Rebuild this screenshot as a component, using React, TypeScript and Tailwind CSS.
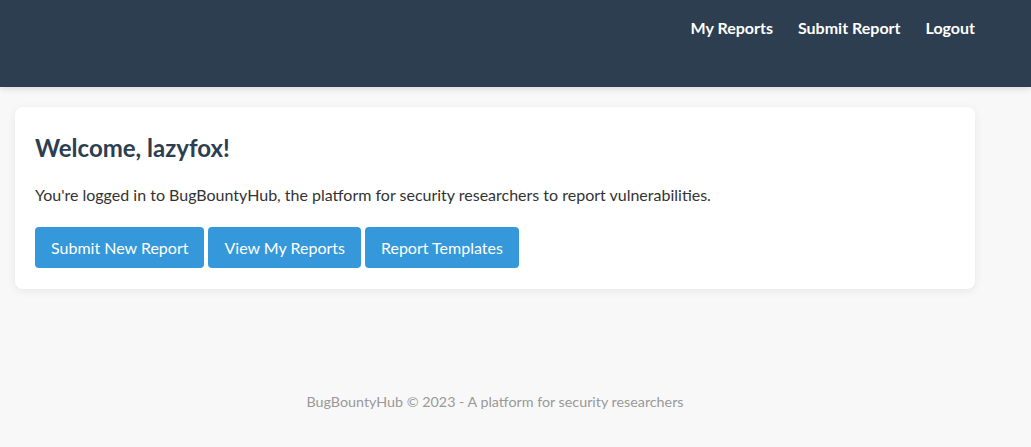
export default function App() {
  return (
    <div className="min-h-[447px] bg-[#f8f8f8] text-[#333] font-['Segoe_UI','Lato','Noto_Sans',sans-serif]">
      <header className="h-[87px] bg-[#2c3e50] text-white shadow-[0_2px_6px_rgba(0,0,0,0.12)]">
        <nav className="w-[960px] ml-[15px] flex justify-end gap-[25px] pt-4 text-base font-bold">
          <a href="#" className="hover:underline">My Reports</a>
          <a href="#" className="hover:underline">Submit Report</a>
          <a href="#" className="hover:underline">Logout</a>
        </nav>
      </header>

      <main className="w-[960px] ml-[15px] pt-5">
        <div className="bg-white rounded-lg shadow-[0_2px_10px_rgba(0,0,0,0.07)] p-5 pb-[21px]">
          <h1 className="text-2xl font-bold text-[#2c3e50] mt-[5px] mb-[19px]">Welcome, lazyfox!</h1>
          <p className="text-base mb-5">
            You're logged in to BugBountyHub, the platform for security researchers to report vulnerabilities.
          </p>
          <div className="flex gap-1">
            <button className="bg-[#3498db] text-white rounded px-4 h-[41px] text-base">Submit New Report</button>
            <button className="bg-[#3498db] text-white rounded px-4 h-[41px] text-base">View My Reports</button>
            <button className="bg-[#3498db] text-white rounded px-4 h-[41px] text-base">Report Templates</button>
          </div>
        </div>

        <footer className="mt-[102px] text-center text-[14.3px] text-[#999]">
          BugBountyHub © 2023 - A platform for security researchers
        </footer>
      </main>
    </div>
  );
}
